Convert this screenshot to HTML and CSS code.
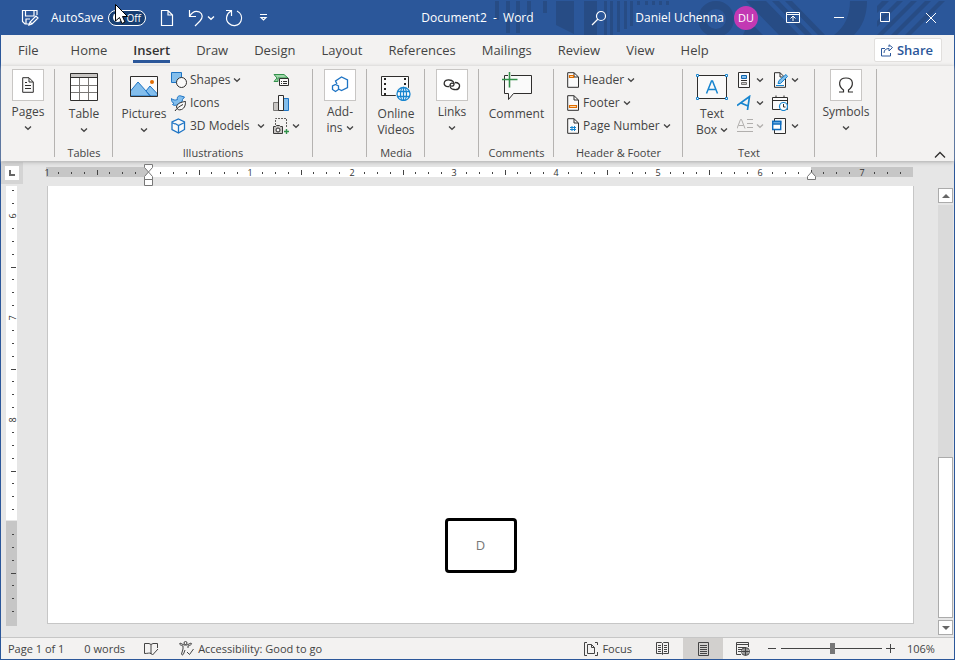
FILE: index.html
```
<!DOCTYPE html>
<html lang="en">
<head>
<meta charset="utf-8">
<title>Document2 - Word</title>
<link rel="stylesheet" href="styles.css">
</head>
<body>
<svg class="defs" width="0" height="0" aria-hidden="true">
  <symbol id="chev" viewBox="0 0 8 6"><path d="M1 1.5L4 4.3L7 1.5" fill="none" stroke="currentColor" stroke-width="1.3"/></symbol>
</svg>
<div class="window">
  <header class="titlebar">
    <svg class="pattern" viewBox="0 0 475 35" aria-hidden="true">
      <g fill="#274c85">
        <path d="M16 1h4v19h-4zM27 1h4v32h-4zM37 1h4v32h-4zM48 1h4v19h-4zM64 1h4v12h-4zM77 1h18v33L77 25zM105 1h13v34h-13zM125 1h3v34h-3zM131 1h3v34h-3zM138 1h3v31h-3zM145 1h3v28h-3zM151 1h3v25h-3zM158 1h3v4h-3zM166 1h3v4h-3zM173 1h3v4h-3zM180 1h3v4h-3zM187 1h3v4h-3z"/>
        <path d="M267 1h20l33 34h-20zM293 1h7l33 34h-7zM306 1h7l33 34h-7zM270 21l14 14h-20z"/>
        <path d="M371 1h17c0 15-5 26-13 34h-20c11-8 16-20 16-34z"/>
        <path d="M403 1h7l-12 12v-7zM418 1h6L398 27v-6zM432 1h6L404 35h-6zM446 1h6L418 35h-6zM460 1h6L432 35h-6z"/>
      </g>
      <circle cx="237" cy="19" r="14" fill="none" stroke="#274c85" stroke-width="8"/>
    </svg>
    <div class="quick">
      <button class="tool save" aria-label="Save"><svg width="18" height="18" viewBox="0 0 18 18"><path d="M9 15H4L1.500 12.500V1.500H16V6M4.500 1.500V7H13V1.500M5 15V10H9M8 16l1-3 6-6 2 2-6 6zM9 13l2 2" /></svg></button>
      <label class="autosave" for="autosave">AutoSave</label>
      <button class="toggle" id="autosave" role="switch" aria-checked="false"><span class="knob"></span>Off</button>
      <button class="tool new" aria-label="New document"><svg width="16" height="18" viewBox="0 0 16 18"><path d="M2.500 1.500H9L13.500 6V16.500H2.500zM9 1.500V6H13.500"/></svg></button>
      <button class="tool undo" aria-label="Undo"><svg width="18" height="18" viewBox="0 0 18 18"><path d="M2.500 1V7.500H9M2.500 7.500C5 3 9 1.500 12.500 3C16 5 16 9 13 12L8 17"/></svg></button>
      <button class="tool arrow" aria-label="Undo history"><svg class="chev"><use href="#chev"/></svg></button>
      <button class="tool redo" aria-label="Repeat"><svg width="18" height="18" viewBox="0 0 18 18"><path d="M1 1.500H6.500V7M6 2C1 5 0 11 4 14.500C8 18 14 17 16 12C17.500 8 16 4 12 2"/></svg></button>
      <button class="tool more" aria-label="Customize toolbar"><svg width="9" height="7" viewBox="0 0 9 7"><path d="M1 .5h7M2 3.500h5L4.500 6z"/></svg></button>
    </div>
    <h1 class="doc-title">Document2&nbsp; -&nbsp; Word</h1>
    <div class="account">
      <button class="tool search" aria-label="Search"><svg width="16" height="16" viewBox="0 0 16 16"><circle cx="10" cy="6" r="4.500"/><path d="M7 9L1 15"/></svg></button>
      <span class="user">Daniel Uchenna</span>
      <span class="avatar">DU</span>
      <button class="tool win" aria-label="Ribbon display options"><svg width="14" height="12" viewBox="0 0 14 12"><path d="M.5.5h13v10H.5zM.5 2.500h13M7 9V4M4.500 6.500L7 4l2.500 2.500"/></svg></button>
      <button class="tool win" aria-label="Minimize"><svg width="12" height="12" viewBox="0 0 12 12"><path d="M1 5.500h10"/></svg></button>
      <button class="tool win" aria-label="Maximize"><svg width="11" height="11" viewBox="0 0 11 11"><path d="M.5.5h9v9h-9z"/></svg></button>
      <button class="tool win" aria-label="Close"><svg width="12" height="12" viewBox="0 0 12 12"><path d="M1 1l10 10M11 1L1 11"/></svg></button>
    </div>
  </header>

  <nav class="tabs">
    <a href="#" class="tab file">File</a><a href="#" class="tab">Home</a><a href="#" class="tab active">Insert</a><a href="#" class="tab">Draw</a><a href="#" class="tab">Design</a><a href="#" class="tab">Layout</a><a href="#" class="tab">References</a><a href="#" class="tab">Mailings</a><a href="#" class="tab">Review</a><a href="#" class="tab">View</a><a href="#" class="tab">Help</a>
    <button class="share"><svg width="12" height="13" viewBox="0 0 12 13"><path d="M4 4.500H.5V12H9.500V9M3 9C3 6 5 4.500 8 4.500V7L11.500 3.500L8 .8V3"/></svg>Share</button>
  </nav>

  <section class="ribbon">
    <div class="group g-pages">
      <div class="items"><button class="big boxed"><span class="pic"><svg width="12" height="16" viewBox="0 0 12 16"><path class="k w" d="M.7.7H7L11.300 5V15.300H.7z"/><path class="k" d="M7 1V5H11M3 5.500h2M3 8.500h6M3 11.500h6"/></svg></span>Pages<svg class="chev"><use href="#chev"/></svg></button></div>
    </div>
    <div class="group g-tables">
      <div class="items"><button class="big"><span class="pic"><svg width="28" height="28" viewBox="0 0 28 28"><path fill="#fff" d="M0 0h28v28H0z"/><path fill="#c8c6c4" d="M0 0h28v5H0z"/><path fill="none" stroke="#797775" d="M9.500 5v23M18.500 5v23M0 12.500h28M0 19.500h28"/><path class="k" d="M.5.5h27v27H.5zM0 4.500h28"/></svg></span>Table<svg class="chev"><use href="#chev"/></svg></button></div>
      <h2>Tables</h2>
    </div>
    <div class="group g-illus">
      <div class="items">
        <button class="big"><span class="pic"><svg width="28" height="22" viewBox="0 0 28 22"><path fill="#fafafa" d="M0 0h28v21H0z"/><path fill="#83beec" stroke="#1e74c4" d="M.5 15L8 6L20.500 20H.5zM16 15l4-5 7.500 8v2H20z"/><circle cx="22" cy="6" r="2" fill="#e06c00"/><path class="k" d="M.5.5h27v20H.5z"/></svg></span>Pictures<svg class="chev"><use href="#chev"/></svg></button>
        <div class="stack">
          <button class="small"><svg width="16" height="16" viewBox="0 0 16 16"><path fill="#83beec" stroke="#1e74c4" d="M.5.5h10v10H.5z"/><circle class="k w" cx="10.500" cy="10.500" r="5"/></svg>Shapes<svg class="chev"><use href="#chev"/></svg></button>
          <button class="small"><svg width="16" height="16" viewBox="0 0 16 16"><path fill="#83beec" stroke="#1e74c4" d="M.5 3.500C2 5 4 5.500 6.500 4.500C5.500 2 8 0 10 1L13.500 2L11.500 4.500C11.500 7 10 8 7 9C5 11 2.500 10.500 1.500 9.500L3 8.500C1 7.500 .5 6 .5 3.500z"/><path class="k w" d="M14.500 6.500C10 7 6 8.500 5.500 12C6 14.500 8 15.500 10.500 14.500C14 13 14.500 9.500 14.500 6.500zM4 16C6 13 9 11 12 9.500"/></svg>Icons</button>
          <button class="small split"><svg width="16" height="16" viewBox="0 0 16 16"><path class="b w" d="M7.500 1L13.500 4V11.500L7.500 15L1 11.500V4zM4 5.500L7.500 7.500L13.500 4.500M7.500 7.500V15M1 4.500L4 6"/></svg>3D Models<svg class="chev"><use href="#chev"/></svg></button>
        </div>
        <div class="stack">
          <button class="small" aria-label="SmartArt"><svg width="16" height="16" viewBox="0 0 16 16"><path fill="#9fd6a9" stroke="#31914a" d="M1 2.500H11L15 6H5V9.500H1L4 6z"/><path class="k w" d="M6.500 6.500h9v7h-9z"/><path class="k" d="M8 9.500h1M10 9.500h4M8 11.500h1M10 11.500h4"/></svg></button>
          <button class="small" aria-label="Chart"><svg width="16" height="16" viewBox="0 0 16 16"><path fill="#c8c6c4" stroke="#797775" d="M.5 7.500h5v8H.5z"/><path fill="#83beec" stroke="#1e74c4" d="M10.500 3.500h5v12h-5z"/><path class="k w" d="M5.500.5h5v15h-5z"/></svg></button>
          <button class="small" aria-label="Screenshot"><svg width="16" height="16" viewBox="0 0 16 16"><path fill="none" stroke="#605e5c" stroke-dasharray="2 1" d="M2.500 7V.5H13.500V10"/><path fill="#c8c6c4" stroke="#3b3a39" d="M.5 8.500H2.500L3.500 7.500H6.500L7.500 8.500H9.500V15.500H.5z"/><circle class="k w" cx="5" cy="12" r="2"/><path stroke="#31914a" stroke-width="1.400" d="M11 13.500h5M13.500 11v5"/></svg><svg class="chev"><use href="#chev"/></svg></button>
        </div>
      </div>
      <h2>Illustrations</h2>
    </div>
    <div class="group g-addins">
      <div class="items"><button class="big boxed"><span class="pic"><svg width="18" height="18" viewBox="0 0 18 18"><path class="b" d="M6 8L4.500 5L10.500 1L16.500 4V11.500L10.500 14.500L7.500 13"/><path class="b" d="M4.500 8.500L7.500 10V13.500L4.500 15.500L1.500 13.500V10z"/></svg></span>Add-<span class="line">ins <svg class="chev"><use href="#chev"/></svg></span></button></div>
    </div>
    <div class="group g-media">
      <div class="items"><button class="big"><span class="pic"><svg width="30" height="28" viewBox="0 0 30 28"><path class="k w" d="M.5 3.500h27v19H.5z"/><path fill="none" stroke="#252423" stroke-width="2" stroke-dasharray="2 3" d="M4 5v17M24 5v17"/><circle cx="22.500" cy="21" r="8" fill="#f3f2f1"/><g fill="#fff" stroke="#1785cf" stroke-width="1.300"><circle cx="22.500" cy="21" r="6.500"/><ellipse cx="22.500" cy="21" rx="3" ry="6.500"/><path d="M16.500 18.500h12M16.500 23.500h12M22.500 14.500v13"/></g></svg></span>Online<span class="line">Videos</span></button></div>
      <h2>Media</h2>
    </div>
    <div class="group g-links">
      <div class="items"><button class="big boxed"><span class="pic"><svg width="18" height="14" viewBox="0 0 18 14"><g class="k" stroke-width="1.300"><path d="M6 8.500C2 9 1 6.500 1.200 5C1.500 2.500 4 1.500 6.500 2C9.500 2.300 11.500 4 11 6.500C10.500 8.500 8.500 8.500 7 7.500"/><path d="M12 4.500C15.500 4.500 17 6.500 16.500 8.500C16 11 13.500 12 11 11.500C8 11 6.500 9 7 7C7.500 5 9.500 4.500 11 6"/></g></svg></span>Links<svg class="chev"><use href="#chev"/></svg></button></div>
    </div>
    <div class="group g-comments">
      <div class="items"><button class="big"><span class="pic"><svg width="32" height="30" viewBox="0 0 32 30"><path class="k w" d="M3.500 3.500h27v18H12.500L7.500 27.500V21.500H3.500z"/><path stroke="#f3f2f1" stroke-width="3" d="M8.500 0v16"/><path stroke="#31914a" stroke-width="1.500" d="M1 7.500h15.500M8.500 0v15.500"/></svg></span>Comment</button></div>
      <h2>Comments</h2>
    </div>
    <div class="group g-hf">
      <div class="items"><div class="stack">
        <button class="small"><svg width="13" height="16" viewBox="0 0 13 16"><path class="k w" d="M.7.7H7L11.500 5V15.300H.7z"/><path class="k" d="M7 1V5H11.500"/><path fill="#fcd7a5" stroke="#e06c00" stroke-width="1.200" d="M2.500 3.500h4v2h-4z"/></svg>Header<svg class="chev"><use href="#chev"/></svg></button>
        <button class="small"><svg width="13" height="16" viewBox="0 0 13 16"><path class="k w" d="M.7.7H7L11.500 5V15.300H.7z"/><path class="k" d="M7 1V5H11.500"/><path fill="#fcd7a5" stroke="#e06c00" stroke-width="1.200" d="M2.500 10.500h7v2h-7z"/></svg>Footer<svg class="chev"><use href="#chev"/></svg></button>
        <button class="small"><svg width="13" height="16" viewBox="0 0 13 16"><path class="k w" d="M.7.7H7L11.500 5V15.300H.7z"/><path class="k" d="M7 1V5H11.500"/><path stroke="#1785cf" d="M5 8v5M7.500 8v5M3 9.500h6M3 11.500h6"/></svg>Page Number<svg class="chev"><use href="#chev"/></svg></button>
      </div></div>
      <h2>Header &amp; Footer</h2>
    </div>
    <div class="group g-text">
      <div class="items">
        <button class="big"><span class="pic"><svg width="32" height="26" viewBox="0 0 32 26"><path class="k w" d="M1.500 1.500h29v23h-29z"/><path fill="none" stroke="#1785cf" stroke-width="1.500" d="M10.500 19.500L15.500 7h1L21.500 19.500M12 15.500h8"/><path fill="#fff" stroke="#1785cf" d="M.5.5h2v2h-2zM29.500.5h2v2h-2zM.5 23.500h2v2h-2zM29.500 23.500h2v2h-2z"/></svg></span>Text<span class="line">Box <svg class="chev"><use href="#chev"/></svg></span></button>
        <div class="stack">
          <button class="small" aria-label="Quick Parts"><svg width="16" height="16" viewBox="0 0 16 16"><path class="k w" d="M1.500.5h11v15h-11z"/><path fill="#83beec" stroke="#0f64ad" d="M4.500 3.500h5v3h-5z"/><path class="k" d="M4 8.500h6"/><path fill="#ccc" stroke="#797775" d="M4.500 10.500h5v2h-5z"/></svg><svg class="chev"><use href="#chev"/></svg></button>
          <button class="small" aria-label="WordArt"><svg width="16" height="16" viewBox="0 0 16 16"><path fill="none" stroke="#1785cf" stroke-width="1.700" d="M0 10.500L12.500 1.500L10.500 15M4 8L11 11"/></svg><svg class="chev"><use href="#chev"/></svg></button>
          <button class="small off" aria-label="Drop Cap" disabled><svg width="16" height="16" viewBox="0 0 16 16"><path fill="none" stroke="currentColor" d="M0 10.500L3.500 1.500h1L8 10.500M1.500 7.500h5M10 1.500h6M10 5.500h6M10 9.500h6M0 13.500h16"/></svg><svg class="chev"><use href="#chev"/></svg></button>
        </div>
        <div class="stack">
          <button class="small" aria-label="Signature Line"><svg width="16" height="16" viewBox="0 0 16 16"><path class="k w" d="M2.500.7H8L13.500 6V15.300H2.500z"/><path class="k" d="M8 1V5H12"/><path fill="#83beec" stroke="#1785cf" d="M6 11.500l1-3 7-6 1.500 2-7 7zM4 13.500h8"/></svg><svg class="chev"><use href="#chev"/></svg></button>
          <button class="small" aria-label="Date and Time"><svg width="16" height="16" viewBox="0 0 16 16"><path class="k w" d="M.5 2.500h15v12H.5zM.5 5.500h15M4 .5v2M12 .5v2"/><circle cx="11.500" cy="11.500" r="4" fill="#fff" stroke="#1785cf" stroke-width="1.200"/><path class="k" d="M11.500 9v3h2"/></svg></button>
          <button class="small" aria-label="Object"><svg width="16" height="16" viewBox="0 0 16 16"><path class="k w" d="M2.500.5h11v15h-11z"/><path fill="#fff" stroke="#0f6cbd" stroke-width="1.400" d="M.7 3.500h8v8h-8z"/><path fill="#83beec" stroke="#0f6cbd" stroke-width="1.400" d="M.7 3.500h8v2.500h-8z"/></svg><svg class="chev"><use href="#chev"/></svg></button>
        </div>
      </div>
      <h2>Text</h2>
    </div>
    <div class="group g-symbols">
      <div class="items"><button class="big boxed"><span class="pic"><svg width="16" height="18" viewBox="0 0 16 18"><path class="k" stroke-width="1.200" d="M1 16h4.500V14C0 10 0 2 8 2S16 10 10.500 14V16H15"/></svg></span>Symbols<svg class="chev"><use href="#chev"/></svg></button></div>
    </div>
    <button class="collapse" aria-label="Collapse the ribbon"><svg width="12" height="8" viewBox="0 0 12 8"><path class="k" stroke-width="1.300" d="M1 6.500L6 1.500L11 6.500"/></svg></button>
  </section>

  <main class="workspace">
    <div class="ruler-row">
      <button class="tabstop" aria-label="Tab selector"><svg width="6" height="6" viewBox="0 0 6 6"><path fill="none" stroke="#666" stroke-width="2" d="M1 0V5H6"/></svg></button>
      <svg class="hruler" width="873" height="24" viewBox="40 162 873 24" role="img" aria-label="Horizontal ruler">
        <defs><pattern id="ht" x="148" y="162" width="102" height="24" patternUnits="userSpaceOnUse"><path fill="#444" d="M12 10h1v2h-1zM25 10h1v2h-1zM38 10h1v2h-1zM51 8h1v5h-1zM63 10h1v2h-1zM76 10h1v2h-1zM89 10h1v2h-1z"/></pattern></defs>
        <path fill="#c6c6c6" d="M46 167h867v10H46z"/><path fill="#fff" d="M148 167h663v10H148z"/>
        <path fill="url(#ht)" d="M50 162h859v24H50z"/>
        <g class="nums"><text x="47" y="176">1</text><text x="250" y="176">1</text><text x="352" y="176">2</text><text x="454" y="176">3</text><text x="556" y="176">4</text><text x="658" y="176">5</text><text x="760" y="176">6</text><text x="862" y="176">7</text></g>
        <path fill="#fff" stroke="#777" d="M144.500 164.500h8v3l-4 4.500 4 4.500v3h-8v-3l4-4.500-4-4.500zM144.500 179.500h8v6h-8zM811.500 172l4 4.500v3h-8v-3z"/>
      </svg>
    </div>
    <div class="canvas">
      <div class="vwrap"><svg class="vruler" width="17" height="440" viewBox="3 186 17 440" role="img" aria-label="Vertical ruler">
        <defs><pattern id="vt" x="6" y="114" width="11" height="102" patternUnits="userSpaceOnUse"><path fill="#444" d="M6 12h2v1h-2zM6 25h2v1h-2zM6 38h2v1h-2zM5 51h5v1h-5zM6 63h2v1h-2zM6 76h2v1h-2zM6 89h2v1h-2z"/></pattern></defs>
        <path fill="#fff" d="M6 186h11v334H6z"/><path fill="#c6c6c6" d="M6 521h11v105H6z"/><path fill="url(#vt)" d="M6 186h11v435H6z"/>
        <g class="nums"><text transform="translate(16 216) rotate(-90)">6</text><text transform="translate(16 318) rotate(-90)">7</text><text transform="translate(16 420) rotate(-90)">8</text></g>
      </svg></div>
      <article class="page"><div class="frame">D</div></article>
      <div class="scrollbar">
        <button class="sb" aria-label="Scroll up"><svg width="8" height="4"><path d="M0 4L4 0L8 4z"/></svg></button>
        <div class="track"><div class="thumb"></div></div>
        <button class="sb" aria-label="Scroll down"><svg width="8" height="4"><path d="M0 0L4 4L8 0z"/></svg></button>
      </div>
    </div>
  </main>

  <footer class="status">
    <span class="pageno">Page 1 of 1</span>
    <span class="words">0 words</span>
    <button class="st proof" aria-label="Proofing"><svg width="15" height="14" viewBox="0 0 15 14"><path d="M7 11.500C5.500 10.500 4 11.500.5 11.500V1.500H5L7 2.500V12M7 2.500L9 1.500H13.500V6M6.500 11l2 2L14 7"/></svg></button>
    <button class="st access"><svg width="15" height="15" viewBox="0 0 15 15"><circle cx="6.500" cy="2" r="1.500"/><path d="M1 2C0 4 2 4 4 5V8L2.500 13C3 14.500 4 14 4.500 13L6 9M1 2L5 4H8L12 2C13.500 3 12 4 9 5V7M8 11l2.500 2.500L14.500 8"/></svg>Accessibility: Good to go</button>
    <button class="st focus"><svg width="14" height="14" viewBox="0 0 14 14"><path d="M3 .5H.5V13.500H3M11 .5H13.500V3M13.500 10V13.500H11M3.500 2.500H7.500L10.500 5.500V11.500H3.500zM7.500 2.500V5.500H10.500"/></svg>Focus</button>
    <button class="st view" aria-label="Read mode"><svg width="14" height="13" viewBox="0 0 14 13"><path d="M.5.5H5.500L6.500 1.500L7.500.5H12.500V11.500H7.500L6.500 12.500L5.500 11.500H.5zM6.500 1.500V12M2 3.500h3M2 5.500h3M2 7.500h3M2 9.500h3M8 3.500h3M8 5.500h3M8 7.500h3M8 9.500h3"/></svg></button>
    <button class="st view current" aria-label="Print layout"><svg width="11" height="14" viewBox="0 0 11 14"><path d="M.5.5h10v13H.5zM2 3.500h7M2 5.500h7M2 7.500h7M2 9.500h7M2 11.500h7"/></svg></button>
    <button class="st view" aria-label="Web layout"><svg width="14" height="14" viewBox="0 0 14 14"><path d="M5 12.500H.5V.5H12.500V5M.5 2.500H12.500M2 5.500h8M2 7.500h4M2 9.500h3"/><circle cx="9.500" cy="9.500" r="4"/><path d="M5.500 9.500h8M9.500 5.500v8M8 6v7M11 6v7"/></svg></button>
    <button class="st sign" aria-label="Zoom out"><svg width="9" height="9"><path d="M0 4.500h8"/></svg></button>
    <input class="zoom" type="range" min="10" max="200" value="107" aria-label="Zoom">
    <button class="st sign" aria-label="Zoom in"><svg width="9" height="9"><path d="M0 4.500h9M4.500 0v9"/></svg></button>
    <span class="percent">106%</span>
  </footer>
  <svg class="cursor" width="14" height="21" viewBox="0 0 14 21" aria-hidden="true"><path fill="#fff" stroke="#000" d="M.5.5V17L4.500 13.500L7 19.500L10 18L7.500 12.500H12.500z"/></svg>
</div>
</body>
</html>
```
FILE: styles.css
```
* { box-sizing: border-box; }
body {
  margin: 0;
  font: 12px/16px "Open Sans", "Noto Sans", sans-serif;
  color: #444;
  background: #e6e6e6;
}
button {
  margin: 0;
  padding: 0;
  border: 0;
  background: none;
  font: inherit;
  color: inherit;
}
svg { flex: none; display: block; }
.defs { position: absolute; }
.chev { width: 8px; height: 6px; color: #444; }
.k { fill: none; stroke: #2f2e2d; }
.b { fill: none; stroke: #1e74c4; stroke-width: 1.3; }
.w { fill: #fafafa; }

.window {
  position: relative;
  display: flex;
  flex-direction: column;
  min-height: 100vh;
  border: 1px solid #2b579a;
  border-top: 0;
}

/* Title bar */
.titlebar {
  position: relative;
  display: grid;
  grid-template-columns: 1fr auto 1fr;
  align-items: center;
  height: 35px;
  background: #2b579a;
  color: #fff;
}
.pattern { position: absolute; right: 0; top: 0; width: 475px; height: 35px; }
.quick, .account, .doc-title { position: relative; }
.quick, .account { display: flex; align-items: center; height: 35px; }
.account { justify-content: flex-end; }
.tool { display: flex; align-items: center; justify-content: center; height: 32px; }
.tool path, .tool circle { fill: none; stroke: #fff; stroke-width: 1.2; }
.tool .chev { color: #fff; }
.save { margin: 0 12px 0 20px; }
.toggle {
  display: flex;
  align-items: center;
  gap: 4px;
  width: 38px;
  height: 16px;
  margin: 0 13px 0 5px;
  padding-left: 4px;
  border: 1px solid #fff;
  border-radius: 8px;
  background: #173f73;
  font-size: 10px;
  line-height: 14px;
}
.knob { width: 9px; height: 9px; border-radius: 50%; background: #fff; }
.new { margin-right: 12px; }
.arrow { margin: 0 10px 0 2px; }
.more { margin-left: 16px; }
.doc-title { margin: 0; font-size: 12px; font-weight: 400; }
.search { margin-right: 28px; }
.avatar {
  width: 24px;
  margin: 0 12px 0 10px;
  border-radius: 50%;
  background: #c239b3;
  font-size: 11px;
  line-height: 24px;
  text-align: center;
}
.win { width: 46px; }
.win path { stroke-width: 1; }

/* Tabs */
.tabs {
  display: flex;
  align-items: flex-start;
  gap: 26px;
  height: 31px;
  padding: 2px 12px 0 17px;
  background: #f3f2f1;
}
.tab {
  padding: 4px 0 1px;
  border-bottom: 3px solid transparent;
  font-size: 13px;
  line-height: 18px;
  color: #444;
  text-decoration: none;
}
.file { margin-right: 6px; }
.active { border-color: #2b579a; color: #333; font-weight: 600; }
.share {
  display: flex;
  align-items: center;
  gap: 4px;
  height: 24px;
  margin: 1px 0 0 auto;
  padding: 0 8px 0 6px;
  border: 1px solid #e1dfdd;
  border-radius: 2px;
  background: #fff;
  font-size: 13px;
  font-weight: 600;
  color: #2b579a;
}
.share path { fill: none; stroke: #2b579a; }

/* Ribbon */
.ribbon {
  position: relative;
  z-index: 1;
  display: flex;
  height: 95px;
  padding-top: 2px;
  background: #f3f2f1;
  box-shadow: 0 1px 4px #aaa;
}
.group {
  display: flex;
  flex-direction: column;
  justify-content: space-between;
  background: linear-gradient(#b5b3b1, #b5b3b1) right 1px / 1px 88px no-repeat;
}
.group h2 {
  margin: 0;
  font-size: 11px;
  font-weight: 400;
  line-height: 16px;
  text-align: center;
}
.items { display: flex; justify-content: center; }
.g-pages, .g-addins, .g-links { width: 54px; }
.g-tables, .g-media { width: 58px; }
.g-illus { width: 200px; }
.g-comments { width: 75px; }
.g-hf { width: 129px; }
.g-text { width: 132px; }
.g-symbols { width: 62px; }
.g-illus .items, .g-hf .items, .g-text .items { justify-content: flex-start; }
.g-illus .items { padding-left: 7px; }
.g-hf .items, .g-text .items { padding-left: 13px; }
.big {
  display: flex;
  flex-direction: column;
  align-items: center;
  white-space: nowrap;
}
.big > .chev { margin-top: 5px; }
.pic { display: flex; align-items: center; justify-content: center; height: 38px; }
.boxed .pic {
  width: 32px;
  height: 32px;
  margin: 1px 0 3px;
  border: 1px solid #c8c6c4;
  background: #fff;
}
.line { display: flex; align-items: center; gap: 3px; }
.g-illus .big { width: 48px; margin-right: 3px; }
.g-text .big { width: 32px; margin-right: 9px; }
.small {
  display: flex;
  align-items: center;
  gap: 3px;
  height: 23px;
  white-space: nowrap;
}
.stack + .stack { margin-left: 8px; }
.split .chev { margin-left: 4px; }
.off, .off .chev { color: #b1afad; }
.collapse { align-self: flex-end; margin: 0 8px 2px auto; }

/* Workspace */
.workspace { display: flex; flex: 1; flex-direction: column; }
.ruler-row { display: flex; height: 25px; padding-top: 1px; }
.tabstop {
  display: flex;
  flex: none;
  align-items: center;
  justify-content: center;
  width: 22px;
  height: 22px;
  margin-right: 17px;
  border: 4px solid #d4d4d4;
  background: #fff;
}
.nums { font-size: 9px; fill: #333; text-anchor: middle; }
.canvas { display: flex; flex: 1; }
.vwrap { width: 46px; padding-left: 2px; }
.page {
  display: flex;
  flex: 1;
  align-items: flex-end;
  justify-content: center;
  margin-bottom: 13px;
  padding-bottom: 50px;
  border: 1px solid #c6c6c6;
  border-top: 0;
  background: #fff;
}
.frame {
  width: 72px;
  border: 3px solid #000;
  border-radius: 4px;
  font-size: 13px;
  line-height: 49px;
  text-align: center;
  color: #777;
}
.scrollbar {
  display: flex;
  flex-direction: column;
  gap: 2px;
  width: 15px;
  margin: 2px 1px 2px 24px;
}
.sb {
  display: flex;
  align-items: center;
  justify-content: center;
  height: 15px;
  border: 1px solid #ababab;
  background: #fff;
}
.sb path { fill: #666; }
.track { display: flex; flex: 1; flex-direction: column; justify-content: flex-end; background: #dadada; }
.thumb { height: 39%; border: 1px solid #ababab; background: #fff; }

/* Status bar */
.status {
  display: flex;
  align-items: center;
  height: 22px;
  padding: 0 19px 0 7px;
  border-top: 1px solid #c6c6c6;
  background: #f3f2f1;
  font-size: 11px;
}
.words { margin: 0 19px 0 20px; }
.st { display: flex; align-items: center; gap: 4px; height: 21px; white-space: nowrap; }
.st path, .st circle { fill: none; stroke: #444; }
.access { margin-left: 20px; }
.focus { margin: 0 11px 0 auto; }
.view { justify-content: center; width: 40px; }
.current { background: #d2d0ce; }
.sign { margin: 0 4px; }
.view + .sign { margin-left: 5px; }
.zoom {
  width: 101px;
  height: 12px;
  margin: 0;
  appearance: none;
  background: linear-gradient(#444, #444) center / 100% 1px no-repeat;
}
.zoom::-webkit-slider-thumb { width: 5px; height: 11px; appearance: none; background: #777; }
.percent { width: 28px; margin-left: 8px; }

.cursor { position: absolute; left: 114px; top: 4px; }
```
